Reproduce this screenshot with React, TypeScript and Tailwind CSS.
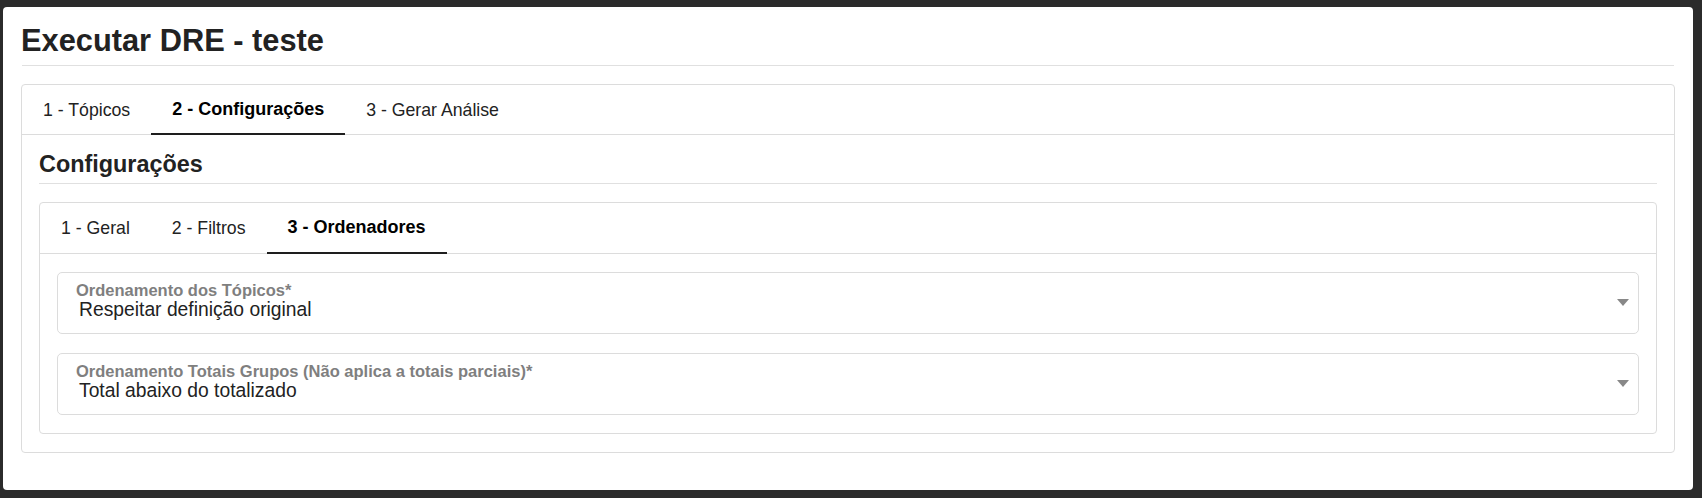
import clsx from "clsx";

function Tab({ label, active }: { label: string; active?: boolean }) {
  return (
    <div
      className={clsx(
        "flex items-center px-[21px] whitespace-nowrap",
        active ? "border-b-2 border-[#1e1e1e] text-[18px] font-bold text-black" : "text-[17.7px] text-[#222]"
      )}
    >
      {label}
    </div>
  );
}

function SelectField({ label, value }: { label: string; value: string }) {
  return (
    <div className="flex rounded-[5px] border border-[#dcdcdc] pl-[18px] pr-[9px] pt-[8px] pb-[13px]">
      <div className="flex-1">
        <div className="text-[16.5px] leading-[19px] font-bold text-[#7f7f7f]">{label}</div>
        <div className="ml-[3px] text-[19.3px] leading-[20px] text-[#222]">{value}</div>
      </div>
      <svg className="mt-[4px] self-center" width="12" height="7" viewBox="0 0 12 7">
        <polygon points="0,0 12,0 6,7" fill="#888" />
      </svg>
    </div>
  );
}

export default function App() {
  return (
    <div className="h-[498px] bg-[#2b2b2b] pl-[3px] pr-[9px] pt-[7px] font-['Liberation_Sans',Arial,sans-serif]">
      <div className="h-[483px] rounded-[4px] bg-white px-[18px] pt-[16px]">
        <h1 className="text-[30.8px] leading-[36px] font-bold text-[#222]">Executar DRE - teste</h1>
        <div className="mx-[1px] mt-[6px] h-px bg-[#e0e0e0]" />

        <div className="mt-[18px] rounded-[4px] border border-[#dcdcdc]">
          <div className="flex h-[50px] border-b border-[#dcdcdc]">
            <div className="-mb-px flex h-[50px]">
              <Tab label="1 - Tópicos" />
              <Tab label="2 - Configurações" active />
              <Tab label="3 - Gerar Análise" />
            </div>
          </div>

          <div className="px-[17px] pt-[15px] pb-[18px]">
            <h2 className="text-[23.4px] leading-[28px] font-bold text-[#222]">Configurações</h2>
            <div className="mt-[5px] h-px bg-[#e0e0e0]" />

            <div className="mt-[18px] rounded-[4px] border border-[#dcdcdc]">
              <div className="flex h-[51px] border-b border-[#dcdcdc]">
                <div className="-mb-px flex h-[51px]">
                  <Tab label="1 - Geral" />
                  <Tab label="2 - Filtros" />
                  <Tab label="3 - Ordenadores" active />
                </div>
              </div>

              <div className="flex flex-col gap-[19px] px-[17px] pt-[18px] pb-[18px]">
                <SelectField label="Ordenamento dos Tópicos*" value="Respeitar definição original" />
                <SelectField
                  label="Ordenamento Totais Grupos (Não aplica a totais parciais)*"
                  value="Total abaixo do totalizado"
                />
              </div>
            </div>
          </div>
        </div>
      </div>
    </div>
  );
}
